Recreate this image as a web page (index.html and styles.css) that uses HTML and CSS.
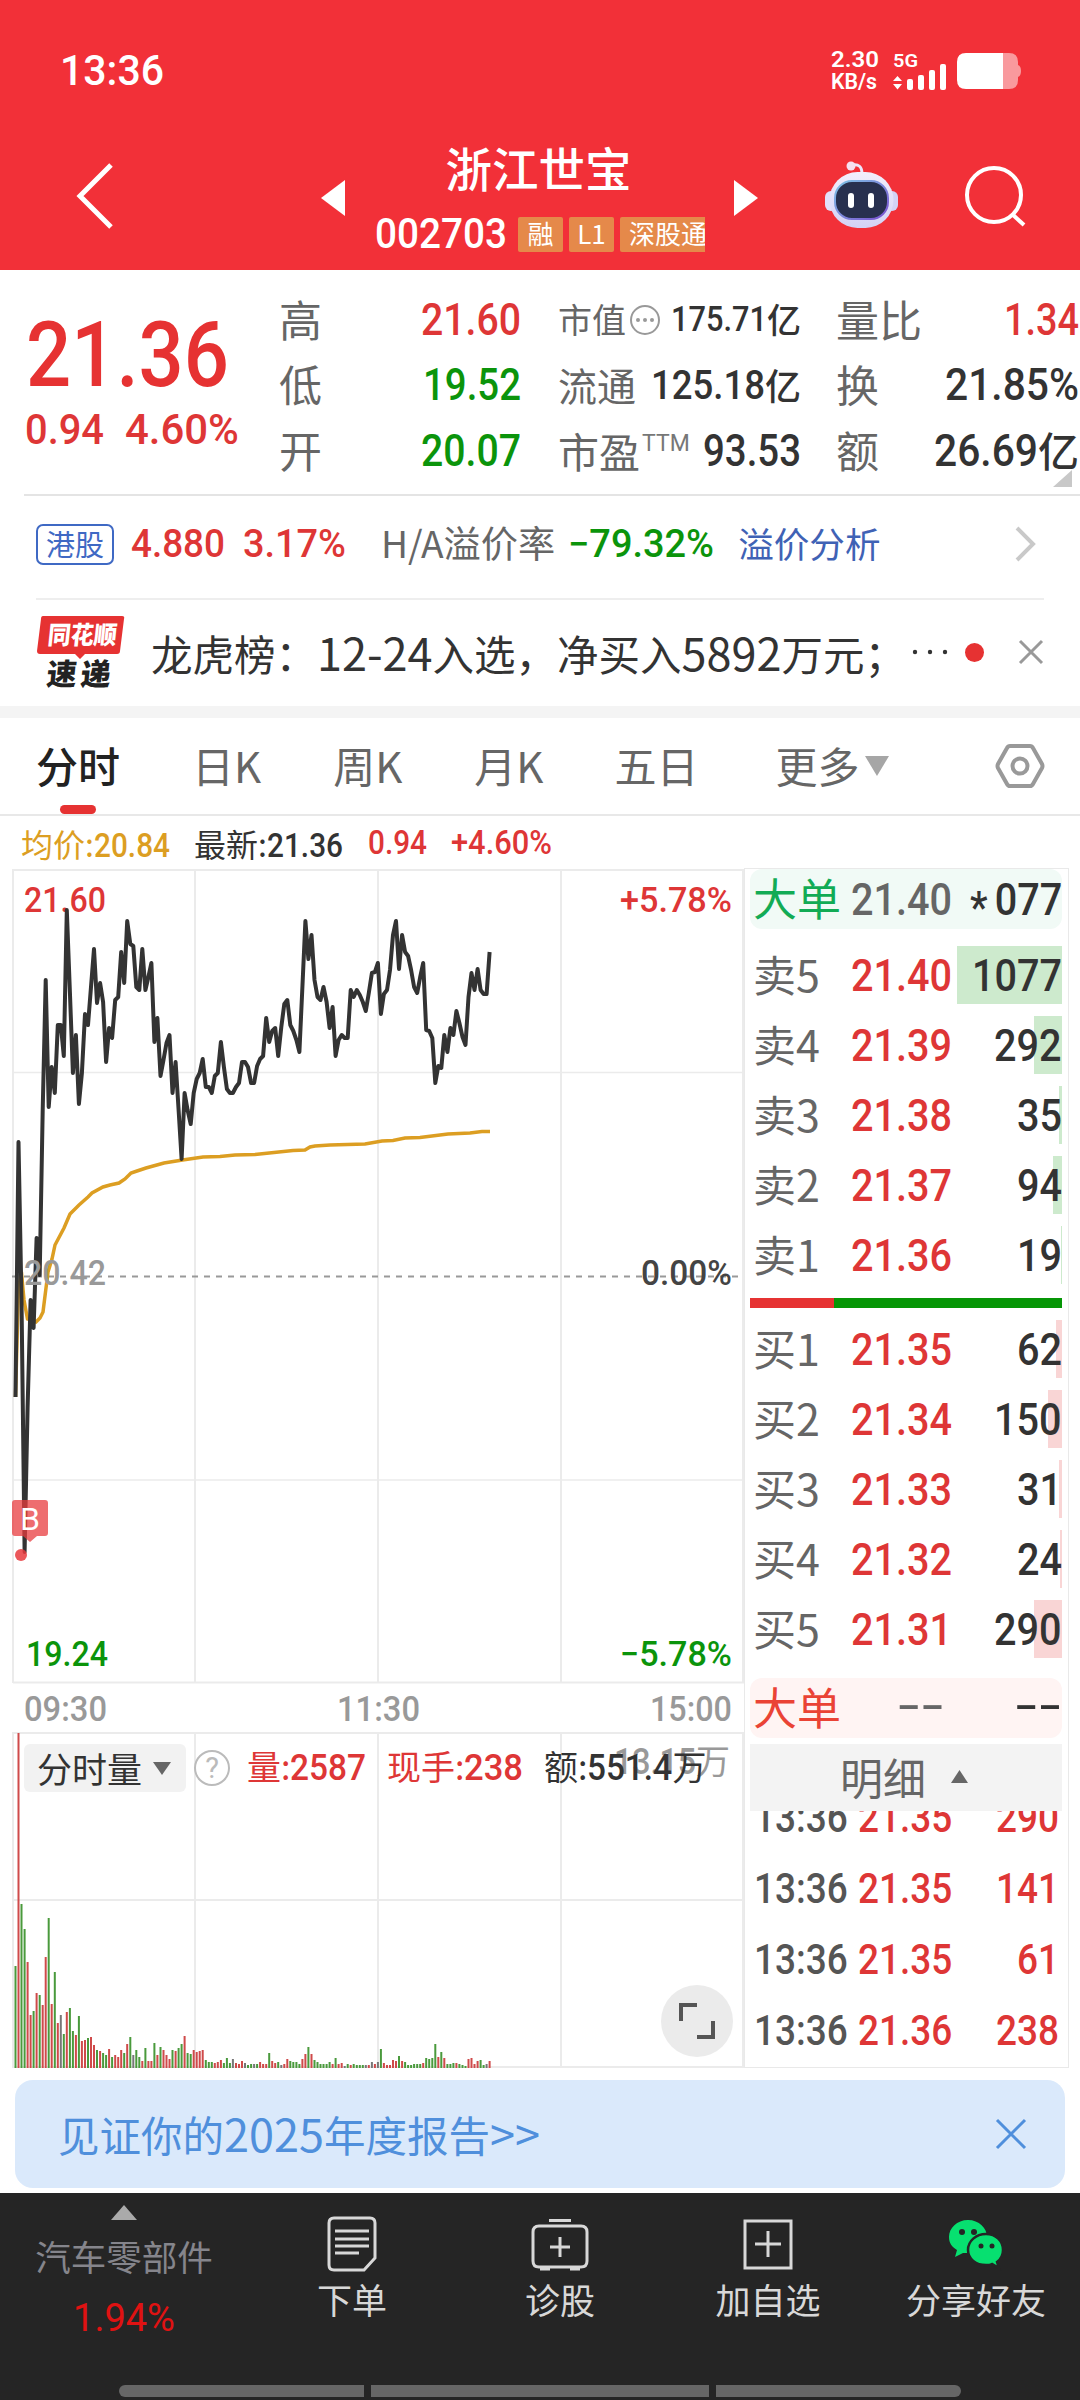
FILE: index.html
```html
<!DOCTYPE html>
<html lang="zh-CN">
<head>
    <meta charset="UTF-8">
    <meta name="viewport" content="width=device-width, initial-scale=1.0">
    <title>浙江世宝 002703</title>
    <link rel="stylesheet" href="styles.css">
</head>
<body>
    <header class="header">
        <div class="status-bar">
            <span class="num clock" data-w="104">13:36</span>
            <div class="status-right">
                <div class="net-speed"><span class="num" data-w="48">2.30</span><span class="num" data-w="46">KB/s</span></div>
                <div class="signal">
                    <span class="num" data-w="25">5G</span>
                    <svg width="54" height="26" viewBox="0 0 54 26" fill="#fff">
                        <path d="M0 17 4.500 12 9 17zM0 20 4.500 25.500 9 20z"/>
                        <rect x="14" y="15" width="6" height="11" rx="2"/>
                        <rect x="25" y="11" width="6" height="15" rx="2"/>
                        <rect x="36" y="6" width="6" height="20" rx="2"/>
                        <rect x="47" y="0" width="6" height="26" rx="2"/>
                    </svg>
                </div>
                <svg width="64" height="36" viewBox="0 0 64 36">
                    <path d="M46 0h6q9 0 9 9v3q3 1 3 6t-3 6v3q0 9-9 9h-6z" fill="#f9999d"/>
                    <path d="M9 0h37v36H9q-9 0-9-9V9q0-9 9-9z" fill="#fff"/>
                </svg>
            </div>
        </div>
        <div class="title-bar">
            <svg class="back" width="40" height="68" viewBox="0 0 40 68" fill="none" stroke="#fff" stroke-width="5"><path d="M36 3 5 34l31 31"/></svg>
            <svg class="prev" width="24" height="36" viewBox="0 0 24 36" fill="#fff"><path d="M0 18 24 0v36z"/></svg>
            <div class="title">
                <h1>浙江世宝</h1>
                <div class="title-sub">
                    <span class="num code" data-w="132">002703</span>
                    <span class="tag">融</span>
                    <span class="tag">L1</span>
                    <span class="tag tag-cut">深股通</span>
                </div>
            </div>
            <svg class="next" width="24" height="36" viewBox="0 0 24 36" fill="#fff"><path d="M24 18 0 0v36z"/></svg>
            <svg class="robot" width="74" height="70" viewBox="0 0 74 70">
                <defs>
                    <linearGradient id="shell" x1="0" y1="0" x2="0" y2="1"><stop offset="0" stop-color="#f3eefc"/><stop offset="1" stop-color="#d3d2f5"/></linearGradient>
                    <linearGradient id="rim" x1="0" y1="0" x2="1" y2="1"><stop offset="0" stop-color="#7fc4e6"/><stop offset="1" stop-color="#7a4fd0"/></linearGradient>
                </defs>
                <path d="M27 4q10-2 10 9" fill="none" stroke="#ece6fb" stroke-width="3"/>
                <circle cx="26" cy="5" r="4.500" fill="#f6dff0"/>
                <rect x="0" y="30" width="12" height="20" rx="6" fill="#e2e0fa"/>
                <rect x="61" y="30" width="12" height="20" rx="6" fill="#d3d2f5"/>
                <rect x="4.500" y="11" width="64" height="56" rx="28" fill="url(#shell)"/>
                <rect x="10" y="20" width="53" height="38" rx="17" fill="#28304f" stroke="url(#rim)" stroke-width="2"/>
                <rect x="23" y="32" width="6" height="15" rx="3" fill="#fff"/>
                <rect x="43" y="32" width="6" height="15" rx="3" fill="#fff"/>
            </svg>
            <svg class="search" width="64" height="64" viewBox="0 0 64 64" fill="none" stroke="#fff" stroke-width="4"><circle cx="31" cy="31" r="27"/><path d="m49 50 12 11"/></svg>
        </div>
    </header>

    <section class="quote">
        <div class="quote-main">
            <span class="num price" data-w="203">21.36</span>
            <div class="change"><span class="num" data-w="79">0.94</span><span class="num" data-w="114">4.60%</span></div>
        </div>
        <div class="quote-col col-a">
            <div class="row"><label>高</label><span class="num red" data-w="100">21.60</span></div>
            <div class="row"><label>低</label><span class="num green" data-w="98">19.52</span></div>
            <div class="row"><label>开</label><span class="num green" data-w="100">20.07</span></div>
        </div>
        <div class="quote-col col-b">
            <div class="row small"><label>市值</label>
                <svg class="more" width="32" height="32" viewBox="0 0 32 32" fill="#999"><circle cx="16" cy="16" r="14" fill="none" stroke="#999" stroke-width="2"/><circle cx="9" cy="16" r="2"/><circle cx="16" cy="16" r="2"/><circle cx="23" cy="16" r="2"/></svg>
                <span class="val"><span class="num" data-w="96">175.71</span><em>亿</em></span></div>
            <div class="row mid"><label>流通</label><span class="val"><span class="num" data-w="114">125.18</span><em>亿</em></span></div>
            <div class="row"><label>市盈</label><sup>TTM</sup><span class="num" data-w="98">93.53</span></div>
        </div>
        <div class="quote-col col-c">
            <div class="row"><label>量比</label><span class="num red" data-w="75">1.34</span></div>
            <div class="row"><label>换</label><span class="num" data-w="134">21.85%</span></div>
            <div class="row big"><label>额</label><span class="val"><span class="num" data-w="104">26.69</span><em>亿</em></span></div>
        </div>
        <svg class="corner" width="19" height="17" viewBox="0 0 19 17"><path d="M19 0v17H0z" fill="#c8c8c8"/></svg>
    </section>

    <section class="hk">
        <span class="hk-badge">港股</span>
        <span class="num red hk-price" data-w="94">4.880</span>
        <span class="num red hk-pct" data-w="103">3.17%</span>
        <span class="hk-label">H/A溢价率</span>
        <span class="num green hk-rate" data-w="146">−79.32%</span>
        <a class="hk-link">溢价分析</a>
        <svg class="hk-arrow" width="24" height="38" viewBox="0 0 24 38" fill="none" stroke="#c9c9c9" stroke-width="4"><path d="m4 3 16 16L4 35"/></svg>
    </section>

    <section class="news">
        <svg class="news-logo" width="90" height="74" viewBox="0 0 90 74">
            <path d="M7 1h79q3 0 2 3l-4 32q0 3-3 3H49l-5 5-5-5H4q-3 0-3-3L5 4q0-3 2-3z" fill="#e63232"/>
            <text class="logo-top" x="12" y="29" textLength="69" lengthAdjust="spacingAndGlyphs" transform="skewX(-6) translate(2 0)">同花顺</text>
            <text class="logo-bottom" x="10" y="70" transform="skewX(-6) translate(7 0)" textLength="64">速递</text>
        </svg>
        <p>龙虎榜：<span class="big-digit">12-24</span>入选，净买入<span class="big-digit">5892</span>万元；</p>
        <svg class="dots" width="38" height="6" viewBox="0 0 38 6" fill="#333"><circle cx="4" cy="3" r="2.200"/><circle cx="19" cy="3" r="2.200"/><circle cx="34" cy="3" r="2.200"/></svg>
        <i class="unread"></i>
        <svg class="close" width="26" height="26" viewBox="0 0 26 26" stroke="#999" stroke-width="3"><path d="m2 2 22 22M24 2 2 24"/></svg>
    </section>

    <nav class="tabs">
        <a class="active">分时</a>
        <a>日K</a>
        <a>周K</a>
        <a>月K</a>
        <a>五日</a>
        <a>更多<svg width="24" height="20" viewBox="0 0 24 20"><path d="M0 0h24L12 20z" fill="#a6a6a6"/></svg></a>
        <svg class="setting" width="50" height="46" viewBox="0 0 50 46" fill="none" stroke="#999" stroke-width="4"><path d="M15 3h20q2 0 3 2l9 16q1 2 0 4l-9 16q-1 2-3 2H15q-2 0-3-2L3 25q-1-2 0-4l9-16q1-2 3-2z"/><circle cx="25" cy="23" r="7.500"/></svg>
    </nav>

    <main class="board">
        <div class="charts">
            <div class="legend">
                <span class="avg">均价:<b class="num" data-w="76">20.84</b></span>
                <span class="last">最新:<b class="num" data-w="76">21.36</b></span>
                <span class="num red diff" data-w="59">0.94</span>
                <span class="num red" data-w="101">+4.60%</span>
            </div>
            <svg class="chart" width="744" height="1204" viewBox="0 866 744 1204">
                <g fill="none" stroke="#ebebeb" stroke-width="2">
                    <path d="M13 870H744M13 1682.500H744M13 1733H744M13 1900H744M13 2067H744"/>
                    <path d="M13 1072.500H744M13 1480H744" stroke-width="1.500"/>
                    <path d="M13 869V1683M195 869V1683M378 869V1683M561 869V1683M743 869V1683"/>
                    <path d="M13 1732V2068M195 1732V2068M378 1732V2068M561 1732V2068M743 1732V2068"/>
                </g>
                <path d="M12 1276.500H742" stroke="#999" stroke-width="2" stroke-dasharray="6 6"/>
                <g class="axis">
                    <text class="red" x="24" y="912" textLength="82" lengthAdjust="spacingAndGlyphs">21.60</text>
                    <text class="red" x="620" y="912" textLength="112" lengthAdjust="spacingAndGlyphs">+5.78%</text>
                    <text class="green" x="26" y="1666" textLength="82" lengthAdjust="spacingAndGlyphs">19.24</text>
                    <text class="green" x="620" y="1666" textLength="112" lengthAdjust="spacingAndGlyphs">−5.78%</text>
                    <text class="dark" x="641" y="1285" textLength="91" lengthAdjust="spacingAndGlyphs">0.00%</text>
                    <text class="grey" x="24" y="1721" textLength="83" lengthAdjust="spacingAndGlyphs">09:30</text>
                    <text class="grey" x="337" y="1721" textLength="83" lengthAdjust="spacingAndGlyphs">11:30</text>
                    <text class="grey" x="650" y="1721" textLength="82" lengthAdjust="spacingAndGlyphs">15:00</text>
                </g>
                <polyline id="avgLine" fill="none" stroke="#dc9e22" stroke-width="3.500" points="15.500,1397 18.400,1290 21.400,1272 24,1300 27.500,1319 36,1322 40,1318 43,1312 48,1272 52,1259 55,1245 64,1228 70,1214 79,1205 88,1197 92,1193 103,1187 110,1185 119,1183 125,1179 131,1173 137,1171 146,1168 164,1163 182.500,1160 203,1157 220,1156.500 235,1155 255,1154.500 293,1150.500 305,1150 310,1147 315,1146 330,1145 365,1144 382,1141 393,1140.500 405,1138 420,1137.500 448,1134 470,1133 482,1131.500 490,1131.500"/>
                <polyline id="priceLine" fill="none" stroke="#333" stroke-width="4" stroke-linejoin="round"/>
                <text class="axis grey" x="24" y="1285" textLength="82" lengthAdjust="spacingAndGlyphs">20.42</text>
                <g id="volume"></g>
                <g fill="#e83a3d">
                    <path d="M15 1500h30q3 0 3 3v30q0 3-3 3h-8l-7 6-7-6h-8q-3 0-3-3v-30q0-3 3-3z" opacity=".74"/>
                    <circle cx="21" cy="1555" r="6" opacity=".85"/>
                </g>
                <text class="buy" x="20" y="1530">B</text>
            </svg>
            <div class="vol-bar">
                <span class="vol-select">分时量<svg width="18" height="13" viewBox="0 0 18 13"><path d="M0 0h18L9 13z" fill="#666"/></svg></span>
                <span class="help">?</span>
                <span class="red vol-a">量:<b class="num" data-w="76">2587</b></span>
                <span class="red vol-b">现手:<b class="num" data-w="59">238</b></span>
                <span class="vol-c">额:<b class="num" data-w="85">551.4</b>万</span>
                <span class="vol-max"><b class="num" data-w="82">13.15</b>万</span>
            </div>
            <div class="expand"><svg width="36" height="36" viewBox="0 0 36 36" fill="none" stroke="#555" stroke-width="4"><path d="M2 18V2h16M18 34h16V18"/></svg></div>
        </div>

        <aside class="depth">
            <div class="level big-order sell"><label>大单</label><span class="num p">21.40</span><span class="num q"><span class="star">*</span>077</span></div>
            <div class="levels">
                <div class="level ask"><i style="width:105px"></i><label>卖5</label><span class="num p">21.40</span><span class="num q">1077</span></div>
                <div class="level ask"><i style="width:28px"></i><label>卖4</label><span class="num p">21.39</span><span class="num q">292</span></div>
                <div class="level ask"><i style="width:3px"></i><label>卖3</label><span class="num p">21.38</span><span class="num q">35</span></div>
                <div class="level ask"><i style="width:9px"></i><label>卖2</label><span class="num p">21.37</span><span class="num q">94</span></div>
                <div class="level ask"><i style="width:1px"></i><label>卖1</label><span class="num p">21.36</span><span class="num q">19</span></div>
            </div>
            <div class="ratio"><i style="width:84px"></i></div>
            <div class="levels">
                <div class="level bid"><i style="width:6px"></i><label>买1</label><span class="num p">21.35</span><span class="num q">62</span></div>
                <div class="level bid"><i style="width:14px"></i><label>买2</label><span class="num p">21.34</span><span class="num q">150</span></div>
                <div class="level bid"><i style="width:3px"></i><label>买3</label><span class="num p">21.33</span><span class="num q">31</span></div>
                <div class="level bid"><i style="width:2px"></i><label>买4</label><span class="num p">21.32</span><span class="num q">24</span></div>
                <div class="level bid"><i style="width:28px"></i><label>买5</label><span class="num p">21.31</span><span class="num q">290</span></div>
            </div>
            <div class="level big-order buy-side"><label>大单</label><span class="dash">--</span><span class="dash q">--</span></div>
            <div class="detail-head"><span>明细</span><svg width="17" height="13" viewBox="0 0 17 13"><path d="M8.500 0 17 13H0z" fill="#666"/></svg></div>
            <div class="ticks">
                <div class="tick"><span class="num">13:36</span><span class="num red">21.35</span><span class="num red q">290</span></div>
                <div class="tick"><span class="num">13:36</span><span class="num red">21.35</span><span class="num red q">141</span></div>
                <div class="tick"><span class="num">13:36</span><span class="num red">21.35</span><span class="num red q">61</span></div>
                <div class="tick"><span class="num">13:36</span><span class="num red">21.36</span><span class="num red q">238</span></div>
            </div>
        </aside>
    </main>

    <div class="banner">
        <span>见证你的<span class="big-digit">2025</span>年度报告<span class="big-digit">&gt;&gt;</span></span>
        <svg width="32" height="32" viewBox="0 0 32 32" stroke="#4f8fdc" stroke-width="3"><path d="m2 2 28 28M30 2 2 30"/></svg>
    </div>

    <footer class="footer">
        <div class="sector">
            <svg width="26" height="15" viewBox="0 0 26 15"><path d="M13 0 26 15H0z" fill="#aaa"/></svg>
            <span>汽车零部件</span>
            <span class="sector-pct">1.94%</span>
        </div>
        <div class="action">
            <svg width="50" height="56" viewBox="0 0 50 56" fill="none" stroke="#d8d8d8" stroke-width="3"><path d="M7 2h36q5 0 5 5v35L37 54H7q-5 0-5-5V7q0-5 5-5zM8 15h34M8 23h34M8 30h34M8 37h24"/></svg>
            <span>下单</span>
        </div>
        <div class="action">
            <svg width="58" height="56" viewBox="0 0 58 56" fill="none" stroke="#d8d8d8" stroke-width="3"><path d="M18 4.500h22M8 10h42q6 0 6 6v29q0 6-6 6H8q-6 0-6-6V16q0-6 6-6zM29 21v20M19 31h20M9 53h10M39 53h10"/></svg>
            <span>诊股</span>
        </div>
        <div class="action">
            <svg width="50" height="56" viewBox="0 0 50 56" fill="none" stroke="#d8d8d8" stroke-width="3"><path d="M2 5h46v47H2zM25 15v26M12 28h26"/></svg>
            <span>加自选</span>
        </div>
        <div class="action">
            <svg width="58" height="56" viewBox="0 0 58 56">
                <path d="M21 4C10 4 2 12 2 21c0 6 3 10 8 13l-2 7 8-4h5c11 0 19-7 19-16S32 4 21 4z" fill="#07e070"/>
                <path d="M39 18c-10 0-18 7-18 16s8 15 18 15c2 0 4 0 6-1l7 4-2-6c4-3 6-7 6-12 0-9-7-16-17-16z" fill="#07e070" stroke="#252525" stroke-width="2.500"/>
                <g fill="#252525"><circle cx="15" cy="16" r="3"/><circle cx="27" cy="16" r="3"/><circle cx="34" cy="30" r="2.500"/><circle cx="45" cy="30" r="2.500"/></g>
            </svg>
            <span>分享好友</span>
        </div>
        <div class="gesture"><i></i><i></i><i></i></div>
    </footer>

    <script src="script.js"></script>
</body>
</html>
```

FILE: styles.css
```css
* {
    box-sizing: border-box;
}

body {
    margin: 0;
    width: 1080px;
    height: 2400px;
    overflow: hidden;
    background: #fff;
    color: #333;
    font-family: "Noto Sans CJK SC", sans-serif;
    display: flex;
    flex-direction: column;
}

svg {
    display: block;
    flex: none;
}

em {
    font-style: normal;
    padding-bottom: 3px;
}

.num {
    display: inline-block;
    flex: none;
    font-family: Roboto, sans-serif;
    font-weight: 500;
    white-space: nowrap;
    transform-origin: 0 50%;
}

.big-digit { font-size: 45px; }

.red { color: #de3636; fill: #de3636; }
.green { color: #0b940b; fill: #0b940b; }

/* header */
.header {
    height: 270px;
    flex: none;
    background: #f23038;
    color: #fff;
}

.status-bar {
    height: 142px;
    padding: 52px 59px 0 60px;
    display: flex;
    justify-content: space-between;
}

.clock {
    font-size: 43px;
    line-height: 37px;
}

.status-right {
    display: flex;
}

.status-right > svg {
    margin-top: 1px;
}

.net-speed {
    display: flex;
    flex-direction: column;
    align-items: flex-start;
    width: 62px;
    font-size: 22px;
    line-height: 22px;
    margin-top: -3px;
}

.net-speed .num {
    font-weight: 600;
}

.signal {
    width: 64px;
    font-size: 18px;
    line-height: 13px;
    padding-top: 2px;
}

.signal svg {
    margin-top: -3px;
}

.signal .num {
    display: block;
    width: max-content;
    font-weight: 600;
}

.title-bar {
    display: flex;
    height: 128px;
}

.back { margin: 20px 0 0 75px; }
.prev { margin: 38px 0 0 206px; }
.next { margin: 38px 0 0 29px; }
.robot { margin: 19px 0 0 67px; }
.search { margin: 22px 0 0 64px; }

.title {
    width: 330px;
    margin-left: 30px;
    display: flex;
    flex-direction: column;
}

.title h1 {
    margin: -1px 0 0 -3px;
    font-size: 46.500px;
    line-height: 52px;
    font-weight: 500;
    text-align: center;
}

.title-sub {
    display: flex;
    align-items: center;
    margin-top: 20px;
    height: 42px;
    overflow: hidden;
}

.code {
    font-size: 42px;
    line-height: 42px;
    width: max-content;
}

.tag {
    flex: none;
    width: 45px;
    height: 35px;
    margin-left: 6px;
    background: #e5894a;
    border-radius: 2px;
    font-size: 26px;
    line-height: 32px;
    text-align: center;
}

.code + .tag {
    margin-left: 11px;
}

.tag-cut {
    width: 100px;
    padding-left: 9px;
    text-align: left;
}

/* quote */
.quote {
    position: relative;
    height: 224px;
    flex: none;
    display: flex;
    padding: 17px 0 0 25px;
}

.quote-main {
    width: 254px;
    padding: 18px 0 0 1px;
}

.price {
    color: #e63232;
    font-size: 91px;
    line-height: 100px;
}

.change {
    display: flex;
    gap: 21px;
    color: #de3636;
    font-size: 43px;
    line-height: 48px;
    margin-left: -1px;
}

.quote-col .row {
    display: flex;
    align-items: center;
    height: 65.500px;
    font-size: 43px;
}

.row label {
    color: #666;
    padding-bottom: 4px;
}

.row > :last-child {
    margin-left: auto;
}

.row .num { font-size: 44px; }
.row.small { font-size: 34px; }
.row.small .num { font-size: 35px; }
.row.mid { font-size: 39px; }
.row.mid .num { font-size: 41px; }
.row.mid .val { font-size: 36px; }
.col-b label { padding-bottom: 2px; }
.col-b .row { font-size: 41px; }
.col-b .row.small { font-size: 34px; }
.col-b .row.mid { font-size: 39px; }
.col-a { width: 242px; }
.col-b { width: 243px; margin-left: 37px; }
.col-c { width: 243px; margin-left: 35px; }
.row.big .val { font-size: 41px; }

.more {
    margin-left: 3px;
}

.val {
    display: flex;
    align-items: center;
    font-weight: 500;
}

sup {
    font-family: Roboto, sans-serif;
    font-weight: 400;
    font-size: 23px;
    color: #777;
    margin: 0 0 13px 2px;
    line-height: 24px;
}

.corner {
    position: absolute;
    right: 8px;
    bottom: 7px;
}

/* H share row */
.hk {
    height: 104px;
    flex: none;
    display: flex;
    align-items: center;
    margin-left: 24px;
    padding: 0 43px 6px 12px;
    border-top: 2px solid #e4e4e4;
    font-size: 35px;
}

.hk .num { font-size: 38px; }

.hk-badge {
    width: 78px;
    height: 41px;
    border: 2px solid #3f69c4;
    border-radius: 7px;
    color: #3f69c4;
    font-size: 29px;
    line-height: 34px;
    text-align: center;
}

.hk-price { margin-left: 17px; }
.hk-pct { margin-left: 18px; }
.hk-label { color: #666; margin-left: 35px; font-size: 37.200px; padding-bottom: 4px; white-space: nowrap; }
.hk-rate { margin-left: 13px; }
.hk-link { color: #3f62b5; margin-left: 24px; font-size: 35.600px; padding-bottom: 4px; white-space: nowrap; }
.hk-arrow { margin-left: auto; }

/* news row */
.news {
    height: 108px;
    flex: none;
    display: flex;
    align-items: center;
    margin: 0 36px;
    padding-bottom: 2px;
    border-top: 2px solid #eee;
}

.logo-top {
    font-size: 25px;
    font-weight: 900;
    fill: #fff;
}

.logo-bottom {
    font-size: 30px;
    font-weight: 900;
    fill: #222;
}

.news p {
    margin: 0 0 0 25px;
    width: 752px;
    font-size: 41.500px;
    line-height: 60px;
    white-space: nowrap;
}

.dots { margin-left: 8px; }

.unread {
    width: 19px;
    height: 19px;
    border-radius: 50%;
    background: #e63232;
    margin-left: 16px;
}

.close { margin-left: 34px; }

/* tabs */
.tabs {
    position: relative;
    height: 110px;
    flex: none;
    border-top: 12px solid #f4f4f4;
    border-bottom: 2px solid #e8e8e8;
    display: flex;
    align-items: center;
    padding: 0 35px 0 36px;
    font-size: 42px;
    color: #666;
}

.tabs a {
    display: flex;
    align-items: center;
    margin-right: 72px;
    padding-bottom: 3px;
}

.tabs a:nth-child(4) { margin-right: 71px; }
.tabs a:nth-child(5) { margin-right: 77px; }
.tabs a:nth-child(6) { margin-right: 0; }
.tabs a svg { margin: 2px 0 0 6px; }

.tabs .active {
    color: #222;
    font-weight: 500;
}

.tabs .active::after {
    content: "";
    position: absolute;
    left: 60px;
    bottom: 0;
    width: 36px;
    height: 9px;
    border-radius: 5px;
    background: #e63232;
}

.setting { margin-left: auto; }

/* charts */
.board {
    display: flex;
    height: 1254px;
    flex: none;
}

.charts {
    position: relative;
    width: 744px;
}

.legend {
    display: flex;
    align-items: center;
    height: 50px;
    padding: 3px 0 0 21px;
    font-size: 32px;
}

.legend .num { font-size: 33px; }
.legend .avg { color: #dc9e22; width: 173px; }
.legend .last { width: 174px; }
.legend .diff { width: max-content; }
.legend .diff + .num { margin-left: 24px; }
.legend span { white-space: nowrap; }

.axis {
    font-family: Roboto, sans-serif;
    font-weight: 500;
    font-size: 35px;
}

.dark { fill: #444; }
.grey { fill: #999; }

.buy {
    font-family: Roboto, sans-serif;
    font-size: 32px;
    fill: #fff;
}

.vol-bar {
    position: absolute;
    left: 24px;
    top: 928px;
    width: 714px;
    height: 48px;
    display: flex;
    align-items: center;
    font-size: 34px;
    line-height: 48px;
    white-space: nowrap;
}

.vol-bar .num { font-size: 36px; }

.vol-select {
    display: flex;
    align-items: center;
    justify-content: space-between;
    width: 162px;
    height: 48px;
    padding: 0 15px 0 13px;
    border-radius: 6px;
    background: #f2f2f2;
    font-size: 35px;
    line-height: 46px;
}

.help {
    width: 36px;
    height: 36px;
    margin-left: 8px;
    border: 2px solid #bbb;
    border-radius: 50%;
    color: #bbb;
    font: 29px/32px Roboto, sans-serif;
    text-align: center;
}

.vol-a { margin: -2px 0 0 17px; width: 140px; }
.vol-b { margin-top: -2px; width: 157px; }
.vol-c { margin-top: -2px; }

.vol-max {
    position: absolute;
    right: 8px;
    top: -8px;
    color: #999;
    z-index: -1;
}

.expand {
    position: absolute;
    left: 661px;
    top: 1169px;
    width: 72px;
    height: 72px;
    border-radius: 50%;
    background: #ebebeb;
    display: flex;
    align-items: center;
    justify-content: center;
}

/* order book */
.depth {
    width: 325px;
    height: 1200px;
    margin-top: 52px;
    border: 1px solid #e9e9e9;
    padding: 0 6px 0 5px;
}

.level {
    position: relative;
    display: flex;
    align-items: center;
    height: 58px;
    padding-left: 3px;
    font-size: 43px;
}

.level label {
    width: 98px;
    color: #666;
    padding-bottom: 4px;
}

.level .num {
    position: relative;
    font-size: 45px;
}

.level .p { color: #de3636; }
.level .q { margin-left: auto; }

.level i {
    position: absolute;
    right: 0;
    top: 0;
    height: 58px;
}

.ask i { background: #cdeacd; }
.bid i { background: #f9d5d5; }

.levels {
    display: flex;
    flex-direction: column;
    gap: 12px;
}

.star {
    display: inline-block;
    width: 28px;
    line-height: 30px;
    transform: translateY(8px);
}

.big-order {
    height: 60px;
    border-radius: 12px;
    font-size: 44px;
}

.big-order.sell { background: #f1faf6; margin-bottom: 17px; }
.big-order.sell label { color: #12ab55; }
.big-order.sell .p { color: #666; }
.big-order.buy-side { background: #fff4f3; margin-top: 20px; }
.big-order.buy-side label { color: #ea4335; }

.dash {
    margin-left: 46px;
    font-family: Roboto, sans-serif;
    font-weight: 500;
    font-size: 41px;
    color: #666;
    padding-bottom: 4px;
    transform: scaleX(1.7);
    transform-origin: left;
}

.dash.q {
    color: #333;
    transform-origin: right;
}

.ratio {
    height: 10px;
    margin: 14px 0 12px;
    background: #069606;
}

.ratio i {
    display: block;
    height: 10px;
    background: #e63232;
}

.detail-head {
    position: relative;
    z-index: 1;
    display: flex;
    align-items: center;
    justify-content: center;
    gap: 25px;
    height: 67px;
    margin-top: 6px;
    padding-right: 4px;
    background: #f3f3f3;
    color: #666;
    font-size: 43px;
}

.detail-head span { padding-bottom: 3px; }
.detail-head svg { margin-top: -3px; }

.ticks {
    height: 255px;
    overflow: hidden;
    display: flex;
    flex-direction: column;
    justify-content: flex-end;
}

.tick {
    display: flex;
    align-items: center;
    flex: none;
    height: 71px;
    padding: 0 3px 0 4px;
    color: #555;
}

.tick .num { font-size: 42px; }
.tick .num:nth-child(2) { margin-left: 10px; }
.tick .num.q { margin-left: auto; }

/* banner + footer */
.banner {
    display: flex;
    align-items: center;
    justify-content: space-between;
    flex: none;
    height: 108px;
    margin: 10px 15px 5px;
    padding: 0 38px 0 43px;
    border-radius: 18px;
    background: #dae9fb;
    color: #4f8fdc;
    font-size: 41.500px;
    line-height: 60px;
}

.banner > span { padding-bottom: 2px; }

.footer {
    position: relative;
    display: flex;
    flex: 1;
    background: #252525;
    color: #d8d8d8;
    font-size: 35px;
}

.sector,
.action {
    display: flex;
    flex-direction: column;
    align-items: center;
}

.sector {
    width: 248px;
    padding-top: 12px;
    color: #85858c;
    font-size: 35.500px;
    line-height: 52px;
}

.sector span { margin-top: 10px; }

.sector .sector-pct {
    margin-top: 10px;
    color: #e01212;
    font-family: Roboto, sans-serif;
    font-size: 38px;
}

.action {
    width: 208px;
    padding-top: 23px;
    line-height: 52px;
}

.action span { margin-top: 1px; }

.gesture {
    position: absolute;
    left: 119px;
    bottom: 3px;
    display: flex;
    gap: 7px;
}

.gesture i {
    width: 245px;
    height: 12px;
    background: #666;
}

.gesture i:nth-child(2) { width: 338px; }
.gesture i:first-child { border-radius: 6px 0 0 6px; }
.gesture i:last-child { border-radius: 0 6px 6px 0; }
```

FILE: script.js
```js
const START_X = 15.5;
const STEP = 3.02;
const BASE_Y = 2068;

// y of the price line, one point per minute
const price = [
    1397, 1142, 1300, 1552, 1407, 1300, 1328, 1238, 1275, 1110, 980, 1107, 1067, 1093, 1025, 1025, 1056, 910, 992, 1073,
    1035, 1104, 1073, 1014, 1025, 987, 949, 1003, 983, 1002, 1062, 1028, 1038, 1000, 997, 952, 983, 921, 944, 946,
    987, 990, 949, 990, 977, 963, 1042, 1018, 1076, 1060, 1043, 1035, 1093, 1062, 1110, 1159, 1093, 1110, 1124, 1093,
    1079, 1073, 1059, 1087, 1087, 1093, 1076, 1073, 1042, 1067, 1089, 1093, 1093, 1087, 1083, 1062, 1062, 1067, 1083, 1083,
    1066, 1059, 1056, 1018, 1042, 1031, 1028, 1056, 1027, 1004, 1000, 1025, 1031, 1040, 1052, 987, 921, 959, 935, 980,
    997, 1000, 987, 1002, 1028, 1007, 1056, 1040, 1035, 1038, 1038, 990, 997, 990, 995, 1002, 1011, 993, 973, 972,
    963, 1014, 994, 990, 970, 935, 921, 969, 935, 952, 956, 970, 987, 993, 977, 963, 1030, 1031, 1038, 1083,
    1066, 1068, 1035, 1052, 1028, 1035, 1011, 1023, 1037, 1045, 997, 973, 990, 969, 990, 994, 994, 952
];

// volume per minute: r = up, g = down, k = flat
const volume = 'g102 r335 g164 g139 r106 r53 g57 r75 g73 r63 r111 g150 r64 g96 r45 k53 g34 r56 g60 g37 r33 g52 r27 r28 g30 r31 r23 g18 r17 g15 g13 r19 g11 r13 r11 r18 g15 r24 g31 k13 g18 g11 r7 g20 r7 r7 g25 r13 g21 r18 r13 r9 g18 r17 g20 g24 r32 g15 g14 r18 r16 r17 r18 g8 g6 g6 r5 r6 r8 g5 g10 g5 k9 r5 r4 r7 k5 g3 g4 k4 g4 r6 r4 r4 g15 r7 r5 g6 k3 r4 r9 g7 g6 g6 g4 r9 r14 g21 r14 g8 g6 g4 g4 g4 g6 r4 g10 r4 r5 k2 g4 r3 g4 g3 g3 g3 k3 r3 k6 r4 k6 g19 r5 r3 r3 r8 r7 g12 r7 g6 g3 g3 g4 g4 g4 r5 g10 g9 g10 g24 r11 g16 r10 g4 g4 g5 r5 g4 g3 g2 r9 r10 r4 r7 g8 g3 k4 r7'.split(' ');

const colors = { r: '#cf4a4a', g: '#4a9a3c', k: '#777' };

document.getElementById('priceLine').setAttribute('points',
    price.map((y, i) => `${(START_X + i * STEP).toFixed(1)},${y}`).join(' '));

document.getElementById('volume').innerHTML = volume.map((v, i) => {
    const h = Number(v.slice(1));
    const x = (START_X + i * STEP - 1).toFixed(1);
    return `<rect x="${x}" y="${BASE_Y - h}" width="2" height="${h}" fill="${colors[v[0]]}"/>`;
}).join('');

// narrow the digits, either to a given width or by the default ratio
document.querySelectorAll('.num').forEach(el => {
    const natural = el.getBoundingClientRect().width;
    const target = el.dataset.w ? Number(el.dataset.w) : natural * 0.88;
    el.style.transform = `scaleX(${target / natural})`;
    el.style.marginRight = `${target - natural}px`;
});
```
